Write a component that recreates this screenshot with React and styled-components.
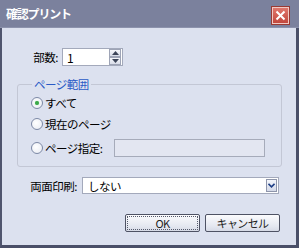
import styled, { createGlobalStyle } from "styled-components";

const GlobalStyle = createGlobalStyle`
  html, body {
    margin: 0;
    padding: 0;
    background: #ffffff;
  }
  * {
    box-sizing: border-box;
  }
`;

const font = `"MS UI Gothic", "Noto Sans CJK JP", "Liberation Sans", sans-serif`;

// window frame
const Window = styled.div`
  width: 299px;
  height: 248px;
  display: flex;
  flex-direction: column;
  background: #dce1ef;
  border-left: 2px solid #50556e;
  border-right: 3px solid #4a4f68;
  border-bottom: 3px solid #4a4f68;
  font-family: ${font};
  font-size: 11.5px;
  letter-spacing: -0.5px;
  color: #000;
`;

const TitleBar = styled.div`
  height: 28px;
  margin-left: -2px;
  margin-right: -3px;
  padding: 0 10px 0 6px;
  display: flex;
  align-items: center;
  justify-content: space-between;
  background: #7b819d;
  border-bottom: 1px solid #8d93ad;
`;

const Title = styled.span`
  color: #ffffff;
  font-size: 12px;
  font-weight: bold;
  letter-spacing: -1.2px;
`;

const CloseButton = styled.button`
  width: 17px;
  height: 17px;
  margin-top: 4px;
  padding: 0;
  display: flex;
  align-items: center;
  justify-content: center;
  background: linear-gradient(#e0776c, #c2473d);
  border: 1px solid #f1c9c3;
  outline: 1px solid #9a3a33;
`;

const Row = styled.div`
  display: flex;
  align-items: center;
  padding-left: ${(p) => p.$left || 25}px;
  padding-right: ${(p) => p.$right || 0}px;
  margin-top: ${(p) => p.$top || 0}px;
`;

const Label = styled.span`
  width: ${(p) => p.$width}px;
  padding-right: ${(p) => p.$gap || 4}px;
  flex-shrink: 0;
  white-space: nowrap;
  text-align: right;
`;

const SpinBox = styled.div`
  width: 61px;
  height: 18px;
  display: flex;
  align-items: center;
  justify-content: space-between;
  background: #ffffff;
  border: 1px solid #a3a9bb;
  padding: 0 1px 0 4px;
  font-size: 12px;
`;

const SpinButtons = styled.div`
  display: flex;
  flex-direction: column;
`;

const SpinButton = styled.div`
  width: 12px;
  height: 8px;
  display: flex;
  align-items: center;
  justify-content: center;
  background: linear-gradient(#f6f7fb, #d9dde9);
  border: 1px solid #9ea4b6;
`;

const GroupBox = styled.fieldset`
  margin: 11px 14px 0 15px;
  padding: 0 16px 9px 13px;
  border: 1px solid #c3c7d5;
  border-radius: 3px;
  min-width: 0;
`;

const Legend = styled.legend`
  margin-left: 1px;
  padding: 0 2px;
  line-height: 14px;
  color: #2a5ac6;
`;

const RadioRow = styled.label`
  display: flex;
  align-items: center;
  height: ${(p) => p.$height || 20}px;
  margin-top: ${(p) => p.$top || 0}px;
  gap: 2px;
`;

const RadioCircle = styled.span`
  width: 12px;
  height: 12px;
  border-radius: 50%;
  border: 1px solid #7d89a6;
  background: radial-gradient(circle at 40% 40%, #ffffff, #e6e9f2);
  display: flex;
  align-items: center;
  justify-content: center;
  flex-shrink: 0;
  &::after {
    content: "";
    width: 4px;
    height: 4px;
    border-radius: 50%;
    background: ${(p) => (p.$checked ? "#3aa84a" : "transparent")};
    box-shadow: ${(p) => (p.$checked ? "0 0 1px #7cd27f" : "none")};
  }
`;

const TextBox = styled.div`
  width: 151px;
  height: 18px;
  margin-left: auto;
  background: #e3e6f1;
  border: 1px solid #a6abba;
`;

const Select = styled.div`
  flex: 1;
  height: 17px;
  display: flex;
  align-items: center;
  justify-content: space-between;
  background: #ffffff;
  border: 1px solid #a3a9bb;
  padding: 0 1px 0 5px;
`;

const DropButton = styled.div`
  width: 11px;
  height: 13px;
  display: flex;
  align-items: center;
  justify-content: center;
  background: linear-gradient(#f4f6fb, #d4d9e8);
  border: 1px solid #8e95ab;
`;

const ButtonBar = styled.div`
  display: flex;
  justify-content: flex-end;
  gap: 5px;
  padding-right: 16px;
  margin-top: 20px;
`;

const Button = styled.button`
  width: 75px;
  height: 18px;
  padding: 1px;
  font-family: ${font};
  font-size: 11px;
  letter-spacing: -0.6px;
  color: #222;
  background: linear-gradient(#fbfbfd, #e4e7f0 70%, #d6dae6);
  border: 1px solid #4e5264;
  border-radius: 2px;
  display: flex;
`;

const ButtonFace = styled.span`
  flex: 1;
  display: flex;
  align-items: center;
  justify-content: center;
  border: 1px dotted ${(p) => (p.$focused ? "#555a6c" : "transparent")};
  line-height: 12px;
`;

function Arrow({ up }) {
  return (
    <svg width="7" height="4" viewBox="0 0 7 4">
      <path
        d={up ? "M0 4 L3.5 0 L7 4 Z" : "M0 0 L3.5 4 L7 0 Z"}
        fill="#3c4458"
      />
    </svg>
  );
}

export default function App() {
  return (
    <>
      <GlobalStyle />
      <Window>
        <TitleBar>
          <Title>確認プリント</Title>
          <CloseButton aria-label="close">
            <svg width="11" height="11" viewBox="0 0 11 11">
              <path
                d="M1.5 1.5 L9.5 9.5 M9.5 1.5 L1.5 9.5"
                stroke="#ffffff"
                strokeWidth="2"
              />
            </svg>
          </CloseButton>
        </TitleBar>

        <Row $top={20}>
          <Label $width={35} $gap={4}>部数:</Label>
          <SpinBox>
            <span>1</span>
            <SpinButtons>
              <SpinButton>
                <Arrow up />
              </SpinButton>
              <SpinButton>
                <Arrow />
              </SpinButton>
            </SpinButtons>
          </SpinBox>
        </Row>

        <GroupBox>
          <Legend>ページ範囲</Legend>
          <RadioRow $top={2}>
            <RadioCircle $checked />
            すべて
          </RadioRow>
          <RadioRow $top={1}>
            <RadioCircle />
            現在のページ
          </RadioRow>
          <RadioRow $top={5} $height={18}>
            <RadioCircle />
            ページ指定:
            <TextBox />
          </RadioRow>
        </GroupBox>

        <Row $top={10} $right={17}>
          <Label $width={55} $gap={5}>両面印刷:</Label>
          <Select>
            <span>しない</span>
            <DropButton>
              <svg width="7" height="5" viewBox="0 0 7 5">
                <path
                  d="M0.5 0.8 L3.5 3.8 L6.5 0.8"
                  stroke="#1f3f86"
                  strokeWidth="1.6"
                  fill="none"
                />
              </svg>
            </DropButton>
          </Select>
        </Row>

        <ButtonBar>
          <Button>
            <ButtonFace $focused>OK</ButtonFace>
          </Button>
          <Button>
            <ButtonFace>キャンセル</ButtonFace>
          </Button>
        </ButtonBar>
      </Window>
    </>
  );
}
